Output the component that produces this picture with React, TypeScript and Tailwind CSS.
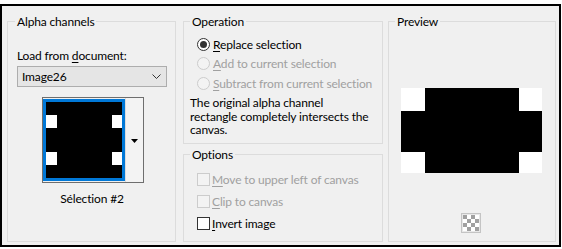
import type { ReactNode } from "react";
import { clsx, type ClassValue } from "clsx";
import { twMerge } from "tailwind-merge";

function cn(...inputs: ClassValue[]) {
  return twMerge(clsx(inputs));
}

function Group({
  title,
  className,
  legendClass,
  children,
}: {
  title: string;
  className?: string;
  legendClass?: string;
  children: ReactNode;
}) {
  return (
    <fieldset className={cn("min-w-0 border border-[#dcdcdc]", className)}>
      <legend className={cn("ml-[6px] px-[2px] leading-[15px] text-black", legendClass)}>{title}</legend>
      {children}
    </fieldset>
  );
}

function Radio({ label, hot, checked, disabled }: { label: string; hot: string; checked?: boolean; disabled?: boolean }) {
  const rest = label.slice(hot.length);
  return (
    <div className="flex items-center pl-[13px]">
      <span
        className={cn(
          "grid h-[13px] w-[13px] place-items-center rounded-full border",
          disabled ? "border-[#cccccc] bg-[#f3f3f3]" : "border-[#333333] bg-white"
        )}
      >
        {checked && <span className="h-[7px] w-[7px] rounded-full bg-[#333333]" />}
      </span>
      <span className={cn("ml-[3px] leading-[15px]", disabled ? "text-[#a0a0a0]" : "text-black")}>
        <u className="underline-offset-2">{hot}</u>
        {rest}
      </span>
    </div>
  );
}

function Check({ label, hot, disabled }: { label: string; hot: string; disabled?: boolean }) {
  const rest = label.slice(hot.length);
  return (
    <div className="flex h-[22px] items-center pl-[13px]">
      <span
        className={cn(
          "h-[13px] w-[13px] border",
          disabled ? "border-[#cccccc] bg-[#f3f3f3]" : "border-[#333333] bg-white"
        )}
      />
      <span className={cn("ml-[2px] leading-[15px]", disabled ? "text-[#a0a0a0]" : "text-black")}>
        <u className="underline-offset-2">{hot}</u>
        {rest}
      </span>
    </div>
  );
}

function Thumbnail() {
  return (
    <div className="ml-[25px] mt-[10px] flex h-[86px] w-[102px] border border-[#6e6e6e]">
      <div className="mt-[1px] h-[82px] w-[82px] border-[3px] border-[#0078d7] bg-black">
        <div className="flex h-full flex-col">
          <div className="h-[13px]" />
          <div className="flex h-[13px] justify-between">
            <div className="w-[11px] bg-white" />
            <div className="w-[10px] bg-white" />
          </div>
          <div className="h-[24px]" />
          <div className="flex h-[13px] justify-between">
            <div className="w-[11px] bg-white" />
            <div className="w-[10px] bg-white" />
          </div>
        </div>
      </div>
      <div className="flex flex-1 items-center justify-center border-l border-[#dcdcdc] bg-[#f3f3f3]">
        <svg width="7" height="4" viewBox="0 0 7 4" className="mt-[2px]">
          <path d="M0 0 H7 L3.5 4 Z" fill="#000" />
        </svg>
      </div>
    </div>
  );
}

function Preview() {
  return (
    <div className="ml-[12px] mt-[59px] flex w-[141px] flex-col">
      <div className="flex h-[23px]">
        <div className="w-[24px] bg-white" />
        <div className="flex-1 bg-black" />
        <div className="w-[23px] bg-white" />
      </div>
      <div className="h-[41px] bg-black" />
      <div className="flex h-[21px]">
        <div className="w-[24px] bg-white" />
        <div className="flex-1 bg-black" />
        <div className="w-[23px] bg-white" />
      </div>
    </div>
  );
}

function Checker() {
  const cells = Array.from({ length: 16 }, (_, i) => i);
  return (
    <div className="ml-[72px] mt-[40px] h-[20px] w-[20px] border border-[#c4c4c4] bg-[#e8e8e8] p-[1px]">
      <div className="grid h-[16px] w-[16px] grid-cols-4">
        {cells.map((i) => (
          <div key={i} className={(Math.floor(i / 4) + i) % 2 ? "bg-white" : "bg-[#a0a0a0]"} />
        ))}
      </div>
    </div>
  );
}

export default function App() {
  return (
    <div className="h-[249px] w-[562px] bg-white pt-[4px] font-['Lato',sans-serif] text-[12px] tracking-[-0.15px] text-black">
      <div className="flex h-[243px] w-[561px] items-start border-2 border-black bg-[#f0f0f0]">
        <Group title="Alpha channels" className="ml-[5px] mt-[8px] h-[228px] w-[169px]" legendClass="ml-[7px]">
          <div className="pl-[9px] pt-[19px]">
            <div className="leading-[15px]">
              Load from <u className="underline-offset-2">d</u>ocument:
            </div>
            <div className="mt-[3px] flex h-[21px] w-[150px] items-center justify-between border border-[#adadad] bg-[#e5e5e5] pl-[4px] pr-[5px]">
              <span className="leading-[15px]">Image26</span>
              <svg width="9" height="5" viewBox="0 0 9 5">
                <path d="M0.5 0.5 L4.5 4.5 L8.5 0.5" fill="none" stroke="#333" strokeWidth="1" />
              </svg>
            </div>
            <Thumbnail />
            <div className="mt-[8px] w-[150px] text-center leading-[15px]">Sélection #2</div>
          </div>
        </Group>

        <div className="ml-[7px] mt-[8px] flex w-[200px] flex-col">
          <Group title="Operation" className="h-[130px]">
            <div className="pt-[5px]">
              <div className="flex h-[20px] flex-col justify-center">
                <Radio label="Replace selection" hot="R" checked />
              </div>
              <div className="flex h-[19px] flex-col justify-center">
                <Radio label="Add to current selection" hot="A" disabled />
              </div>
              <div className="flex h-[20px] flex-col justify-center">
                <Radio label="Subtract from current selection" hot="S" disabled />
              </div>
              <p className="mt-[3px] pl-[6px] leading-[13.5px]">
                The original alpha channel
                <br />
                rectangle completely intersects the
                <br />
                canvas.
              </p>
            </div>
          </Group>
          <Group title="Options" className="mt-[3px] h-[95px]">
            <div className="pt-[6px]">
              <Check label="Move to upper left of canvas" hot="M" disabled />
              <Check label="Clip to canvas" hot="C" disabled />
              <Check label="Invert image" hot="I" />
            </div>
          </Group>
        </div>

        <Group title="Preview" className="ml-[5px] mt-[8px] h-[228px] w-[168px]">
          <Preview />
          <Checker />
        </Group>
      </div>
    </div>
  );
}
